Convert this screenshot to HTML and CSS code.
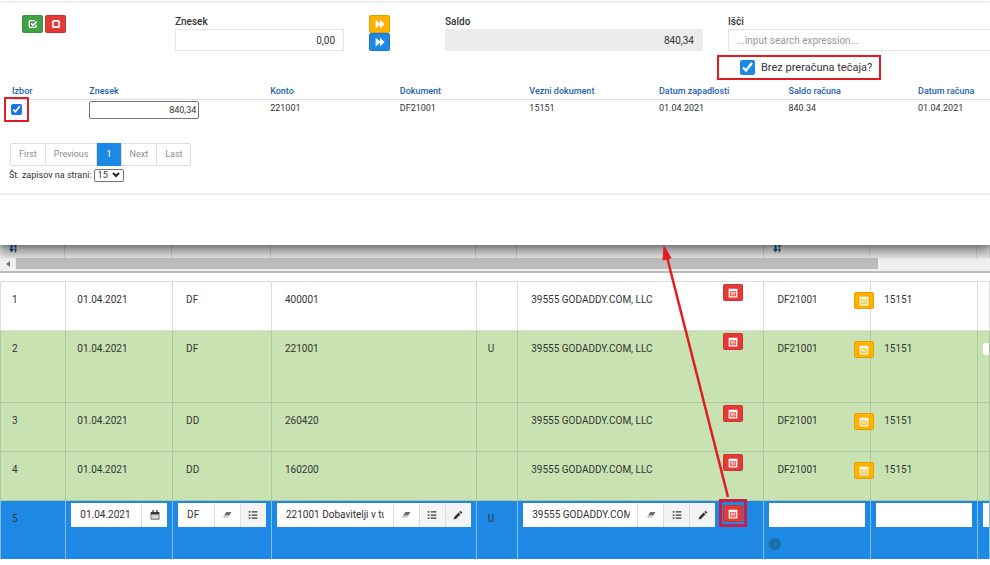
FILE: index.html
```html
<!DOCTYPE html>
<html lang="sl">

<head>
    <meta charset="UTF-8">
    <title>Zapiranje postavk</title>
    <link rel="stylesheet" href="styles.css">
</head>

<body>
    <svg class="symbols" aria-hidden="true">
        <symbol id="i-check" viewBox="0 0 16 16">
            <path d="M13 9v2.5a2 2 0 0 1-2 2H4a2 2 0 0 1-2-2v-7a2 2 0 0 1 2-2h7" fill="none" stroke="currentColor" stroke-width="2" />
            <path d="M5 7l3 3 6-6" fill="none" stroke="currentColor" stroke-width="2.6" />
        </symbol>
        <symbol id="i-square" viewBox="0 0 16 16">
            <rect x="3" y="3" width="10" height="10" rx="2" fill="none" stroke="currentColor" stroke-width="3" />
        </symbol>
        <symbol id="i-forward" viewBox="0 0 16 16">
            <path d="M1 1l7 6V1l7.500 7L8 15V9l-7 6z" fill="currentColor" />
        </symbol>
        <symbol id="i-form" viewBox="0 0 16 16">
            <path d="M1 1h14v14H1zM3 5v8h10V5z" fill="currentColor" fill-rule="evenodd" />
            <path d="M4 7h8M4 9h5M10 9h2M4 11h8" stroke="currentColor" stroke-width="1.2" />
        </symbol>
        <symbol id="i-calendar" viewBox="0 0 16 16">
            <path d="M1 3h14v12H1zM2 7v7h12V7zM4 0h2v3H4zM10 0h2v3h-2z" fill="currentColor" fill-rule="evenodd" />
            <path d="M2 7h12v7H2z" fill="currentColor" opacity=".2" />
        </symbol>
        <symbol id="i-eraser" viewBox="0 0 16 16">
            <path d="M7 3h8l-5 9H1z" fill="currentColor" opacity=".3" />
            <path d="M7 3h8l-3 5H4z" fill="currentColor" opacity=".6" />
        </symbol>
        <symbol id="i-list" viewBox="0 0 16 16">
            <path d="M1 3h3M6 3h9M1 8h3M6 8h9M1 13h3M6 13h9" stroke="currentColor" stroke-width="2" />
        </symbol>
        <symbol id="i-pencil" viewBox="0 0 16 16">
            <path d="M1 15l1-4 7-7 3 3-7 7zM10 3l2-2 3 3-2 2z" fill="currentColor" />
        </symbol>
        <symbol id="i-sort" viewBox="0 0 16 16">
            <path d="M3 0h4v8h3l-5 7-5-7h3zM11 0h4v5h-4zM11 7h4v4l-2 4h-2l1-4h-1z" fill="currentColor" />
        </symbol>
    </svg>

    <div class="page">
        <section class="modal">
            <div class="toolbar">
                <div class="actions">
                    <button class="btn green" type="button" aria-label="Izberi vse"><svg><use href="#i-check" /></svg></button>
                    <button class="btn red" type="button" aria-label="Počisti izbor"><svg><use href="#i-square" /></svg></button>
                </div>
                <div class="field">
                    <label for="znesek">Znesek</label>
                    <input class="number" type="text" id="znesek" value="0,00">
                </div>
                <div class="transfer">
                    <button class="btn yellow" type="button" aria-label="Prenesi"><svg><use href="#i-forward" /></svg></button>
                    <button class="btn blue" type="button" aria-label="Prenesi vse"><svg><use href="#i-forward" /></svg></button>
                </div>
                <div class="field">
                    <label for="saldo">Saldo</label>
                    <input class="number" type="text" id="saldo" value="840,34" readonly>
                </div>
                <div class="field search">
                    <label for="isci">Išči</label>
                    <input type="text" id="isci" placeholder="...input search expression...">
                    <div class="option marked">
                        <input type="checkbox" id="brez" checked>
                        <label for="brez">Brez preračuna tečaja?</label>
                    </div>
                </div>
            </div>

            <table class="items">
                <colgroup>
                    <col class="w-izbor"><col class="w-znesek"><col><col><col><col><col><col class="w-last">
                </colgroup>
                <thead>
                    <tr>
                        <th>Izbor</th>
                        <th>Znesek</th>
                        <th>Konto</th>
                        <th>Dokument</th>
                        <th>Vezni dokument</th>
                        <th>Datum zapadlosti</th>
                        <th>Saldo računa</th>
                        <th>Datum računa</th>
                    </tr>
                </thead>
                <tbody>
                    <tr>
                        <td class="pick"><label class="marked"><input type="checkbox" aria-label="Izbor" checked></label></td>
                        <td><input class="amount" type="text" aria-label="Znesek" value="840,34"></td>
                        <td>221001</td>
                        <td>DF21001</td>
                        <td>15151</td>
                        <td>01.04.2021</td>
                        <td>840.34</td>
                        <td>01.04.2021</td>
                    </tr>
                </tbody>
            </table>

            <nav class="pagination">
                <a href="#">First</a>
                <a href="#">Previous</a>
                <a class="active" href="#">1</a>
                <a href="#">Next</a>
                <a href="#">Last</a>
            </nav>
            <div class="page-size">
                <label for="pageSize">Št. zapisov na strani:</label>
                <div class="select">
                    <select id="pageSize">
                        <option selected>15</option>
                        <option>30</option>
                    </select>
                    <svg viewBox="0 0 8 8" aria-hidden="true"><path d="M1 2l3 3 3-3" /></svg>
                </div>
            </div>
            <div class="modal-footer"></div>
        </section>

        <div class="grid-head columns">
            <span><svg><use href="#i-sort" /></svg></span>
            <span></span><span></span><span></span><span></span><span></span>
            <span><svg><use href="#i-sort" /></svg></span>
            <span></span><span></span>
        </div>
        <div class="scrollbar">
            <button type="button" aria-label="Pomik levo"></button>
            <div class="thumb"></div>
        </div>

        <table class="entries">
            <colgroup>
                <col class="c-num"><col class="c-date"><col class="c-type"><col class="c-konto"><col class="c-u">
                <col class="c-partner"><col class="c-doc"><col class="c-link"><col>
            </colgroup>
            <tbody>
                <tr>
                    <td>1</td>
                    <td>01.04.2021</td>
                    <td>DF</td>
                    <td>400001</td>
                    <td></td>
                    <td><div class="with-btn">39555 GODADDY.COM, LLC<button class="btn red" type="button" aria-label="Odprte postavke"><svg><use href="#i-form" /></svg></button></div></td>
                    <td><div class="with-btn doc">DF21001<button class="btn yellow" type="button" aria-label="Dokument"><svg><use href="#i-form" /></svg></button></div></td>
                    <td>15151</td>
                    <td></td>
                </tr>
                <tr class="closed tall">
                    <td>2</td>
                    <td>01.04.2021</td>
                    <td>DF</td>
                    <td>221001</td>
                    <td>U</td>
                    <td><div class="with-btn">39555 GODADDY.COM, LLC<button class="btn red" type="button" aria-label="Odprte postavke"><svg><use href="#i-form" /></svg></button></div></td>
                    <td><div class="with-btn doc">DF21001<button class="btn yellow" type="button" aria-label="Dokument"><svg><use href="#i-form" /></svg></button></div></td>
                    <td>15151</td>
                    <td class="edge"><div class="chip"></div></td>
                </tr>
                <tr class="closed">
                    <td>3</td>
                    <td>01.04.2021</td>
                    <td>DD</td>
                    <td>260420</td>
                    <td></td>
                    <td><div class="with-btn">39555 GODADDY.COM, LLC<button class="btn red" type="button" aria-label="Odprte postavke"><svg><use href="#i-form" /></svg></button></div></td>
                    <td><div class="with-btn doc">DF21001<button class="btn yellow" type="button" aria-label="Dokument"><svg><use href="#i-form" /></svg></button></div></td>
                    <td>15151</td>
                    <td></td>
                </tr>
                <tr class="closed">
                    <td>4</td>
                    <td>01.04.2021</td>
                    <td>DD</td>
                    <td>160200</td>
                    <td></td>
                    <td><div class="with-btn">39555 GODADDY.COM, LLC<button class="btn red" type="button" aria-label="Odprte postavke"><svg><use href="#i-form" /></svg></button></div></td>
                    <td><div class="with-btn doc">DF21001<button class="btn yellow" type="button" aria-label="Dokument"><svg><use href="#i-form" /></svg></button></div></td>
                    <td>15151</td>
                    <td></td>
                </tr>
                <tr class="editing">
                    <td>5</td>
                    <td class="edit">
                        <div class="group">
                            <input type="text" aria-label="Datum" value="01.04.2021">
                            <button class="white" type="button" aria-label="Koledar"><svg><use href="#i-calendar" /></svg></button>
                        </div>
                    </td>
                    <td class="edit">
                        <div class="group">
                            <input type="text" aria-label="Vrsta" value="DF">
                            <button class="white" type="button" aria-label="Briši"><svg><use href="#i-eraser" /></svg></button>
                            <button type="button" aria-label="Seznam"><svg><use href="#i-list" /></svg></button>
                        </div>
                    </td>
                    <td class="edit">
                        <div class="group">
                            <input type="text" aria-label="Konto" value="221001 Dobavitelji v tujini">
                            <button class="white" type="button" aria-label="Briši"><svg><use href="#i-eraser" /></svg></button>
                            <button type="button" aria-label="Seznam"><svg><use href="#i-list" /></svg></button>
                            <button type="button" aria-label="Uredi"><svg><use href="#i-pencil" /></svg></button>
                        </div>
                    </td>
                    <td>U</td>
                    <td class="edit">
                        <div class="partner">
                            <div class="group">
                                <input type="text" aria-label="Partner" value="39555 GODADDY.COM, LLC">
                                <button class="white" type="button" aria-label="Briši"><svg><use href="#i-eraser" /></svg></button>
                                <button type="button" aria-label="Seznam"><svg><use href="#i-list" /></svg></button>
                                <button type="button" aria-label="Uredi"><svg><use href="#i-pencil" /></svg></button>
                            </div>
                            <div class="marked target"><button class="btn red" type="button" aria-label="Odprte postavke"><svg><use href="#i-form" /></svg></button></div>
                        </div>
                    </td>
                    <td class="edit">
                        <div class="group"><input type="text" aria-label="Dokument"></div>
                        <span class="info">i</span>
                    </td>
                    <td class="edit">
                        <div class="group"><input type="text" aria-label="Vezni dokument"></div>
                    </td>
                    <td class="edit last">
                        <div class="group"></div>
                    </td>
                </tr>
            </tbody>
        </table>

        <svg class="arrow" viewBox="0 0 70 254" aria-hidden="true">
            <path d="M67 252L6 12" stroke="#e31b23" stroke-width="2.500" />
            <path d="M3 1L10 13L2 15z" fill="#e31b23" stroke="#e31b23" />
        </svg>
    </div>
</body>

</html>
```

FILE: styles.css
```css
* {
    box-sizing: border-box;
}

body {
    margin: 0;
    background: #fff;
    color: #333;
    font-family: Roboto, Arial, sans-serif;
    font-size: 10px;
    line-height: 14px;
}

input,
select,
button {
    margin: 0;
    color: inherit;
    font: inherit;
}

.symbols {
    display: none;
}

.page {
    position: relative;
    overflow: hidden;
}

/* modal */
.modal {
    position: relative;
    margin-top: 1px;
    border-top: 2px solid #eee;
    background: #fff;
    box-shadow: 0 8px 8px rgba(0, 0, 0, 0.35), 0 2px 3px rgba(0, 0, 0, 0.2);
}

.toolbar {
    display: grid;
    grid-template-columns: 153fr 194fr 76fr 283fr 262fr;
    padding: 12px 0 0 22px;
}

.actions {
    display: flex;
    align-items: flex-start;
    gap: 2px;
}

.transfer {
    display: flex;
    flex-direction: column;
}

.btn {
    display: flex;
    align-items: center;
    justify-content: center;
    width: 20px;
    height: 17px;
    padding: 0;
    border: 1px solid rgba(0, 0, 0, 0.1);
    border-radius: 2px;
    color: #fff;
}

.btn svg {
    width: 10px;
    height: 10px;
}

.actions .btn {
    width: 21px;
    height: 18px;
}

.transfer .btn {
    width: 21px;
    height: 18px;
}

.green {
    background: #43a047;
}

.red {
    background: #e53935;
}

.yellow {
    background: #ffb300;
}

.blue {
    background: #1e88e5;
}

.field {
    padding-right: 25px;
}

.field > label {
    display: block;
    font-weight: 500;
}

.field > input {
    display: block;
    width: 100%;
    height: 22px;
    padding: 0 8px;
    border: 1px solid #e5e5e5;
    background: #fff;
}

.field > input[readonly] {
    border-color: #ececec;
    background: #ececec;
}

.field.search {
    padding-right: 0;
}

.search > input {
    border-right: 0;
}

.field ::placeholder {
    color: #999;
}

.number {
    text-align: right;
}

.marked {
    border: 2px solid #e31b23;
}

.option {
    display: flex;
    align-items: center;
    gap: 6px;
    width: 164px;
    height: 25px;
    margin: 4px 0 0 -11px;
    padding-left: 21px;
    font-size: 11px;
}

.option input {
    width: 15px;
    height: 15px;
    accent-color: #1e88e5;
}

.items {
    width: calc(100% - 12px);
    margin: 3px 0 0 12px;
    border-collapse: collapse;
    table-layout: fixed;
    font-size: 9px;
}

.items col {
    width: 13.25%;
}

.items .w-izbor {
    width: 7.9%;
}

.items .w-znesek {
    width: 18.5%;
}

.items .w-last {
    width: auto;
}

.items th {
    height: 16px;
    padding: 0;
    border-bottom: 1px solid #ddd;
    color: #1f63ac;
    font-weight: 500;
    text-align: left;
}

.items td {
    height: 24px;
    padding: 1px 0 0;
    vertical-align: top;
}

.items .pick {
    padding: 0;
}

/* the frame covers the header line */
.pick label {
    position: relative;
    display: flex;
    align-items: center;
    justify-content: center;
    width: 25px;
    height: 25px;
    margin: -3px 0 0 -8px;
}

.pick input {
    width: 11px;
    height: 11px;
    accent-color: #1a73e8;
}

.amount {
    display: block;
    width: 110px;
    height: 18px;
    padding: 0 2px;
    border: 1px solid #767676;
    border-radius: 2px;
    text-align: right;
}

.pagination {
    display: flex;
    width: max-content;
    margin: 20px 0 0 10px;
    border: 1px solid #ddd;
    border-radius: 2px;
    font-size: 9px;
    line-height: 21px;
}

.pagination a {
    padding: 0 8px;
    border-right: 1px solid #ddd;
    color: #868e96;
    text-decoration: none;
}

.pagination a:last-child {
    border-right: 0;
}

.pagination .active {
    margin: -1px 0;
    padding: 1px 9px;
    background: #1e88e5;
    color: #fff;
}

.page-size {
    display: flex;
    align-items: center;
    gap: 2px;
    height: 18px;
    margin-left: 9px;
    font-size: 9px;
}

.select {
    display: grid;
    align-items: center;
    width: 30px;
}

.select select,
.select svg {
    grid-area: 1 / 1;
}

.select select {
    height: 13px;
    padding: 0 0 0 3px;
    border: 1px solid #767676;
    border-radius: 2px;
    background: #fff;
    line-height: 11px;
    appearance: none;
}

.select svg {
    justify-self: end;
    width: 8px;
    height: 8px;
    margin-right: 4px;
    fill: none;
    stroke: #222;
    stroke-width: 2;
    pointer-events: none;
}

.modal-footer {
    height: 52px;
    margin-top: 9px;
    border-top: 2px solid #eee;
}

/* header strip that shows below the modal */
.grid-head {
    display: grid;
    grid-template-columns: 65fr 107fr 99fr 205fr 41fr 247fr 106fr 107fr 13fr;
    height: 13px;
    background: #e4e4e4;
}

.grid-head span {
    display: flex;
    padding-left: 9px;
    border-right: 1px solid #ccc;
    color: #1f4e80;
}

.grid-head svg {
    width: 8px;
    height: 8px;
}

.scrollbar {
    display: flex;
    height: 15px;
    padding-bottom: 2px;
    border-bottom: 2px solid #bbb;
    background: #f0f0f0;
}

.scrollbar button {
    display: flex;
    align-items: center;
    justify-content: center;
    width: 16px;
    padding: 0;
    border: 0;
    background: #f0f0f0;
}

.scrollbar button::before {
    content: "";
    border: 3px solid transparent;
    border-right: 4px solid #777;
    border-left: 0;
}

.thumb {
    width: 87.1%;
    background: #bdbdbd;
}

/* entries */
.entries {
    width: 100%;
    margin-top: 8px;
    border-collapse: collapse;
    table-layout: fixed;
}

.c-num {
    width: 6.6%;
}

.c-date,
.c-link {
    width: 10.8%;
}

.c-type {
    width: 10%;
}

.c-konto {
    width: 20.7%;
}

.c-u {
    width: 4.2%;
}

.c-partner {
    width: 24.9%;
}

.c-doc {
    width: 10.8%;
}

.entries td {
    height: 49px;
    padding: 11px 0 0 13px;
    border: 1px solid #ddd;
    vertical-align: top;
}

.entries td:first-child,
.entries td:nth-child(2),
.entries td:nth-child(5) {
    padding-left: 11px;
}

.entries .closed td {
    border-color: #afc79b;
    background: #c8e3b1;
}

.entries .tall td {
    height: 72px;
}

.with-btn {
    display: flex;
    justify-content: space-between;
    height: 14px;
    padding-right: 20px;
}

.with-btn .btn {
    margin-top: -9px;
}

.doc {
    margin-right: -4px;
    padding-right: 0;
}

.doc .btn {
    position: relative;
    margin-top: -1px;
}

.entries .edge {
    padding: 12px 0 0 5px;
}

.chip {
    height: 12px;
    border-radius: 2px 0 0 2px;
    background: #fff;
}

.entries .editing td {
    height: 58px;
    border-color: #7fc0f5;
    border-bottom: 0;
    background: #1e88e5;
}

.entries .editing .edit {
    padding: 2px 5px 0;
}

.entries .editing .last {
    padding-right: 0;
}

.group {
    display: flex;
    height: 24px;
    background: #fff;
}

.group input {
    flex: 1;
    min-width: 0;
    padding: 0 9px;
    border: 0;
    background: #fff;
}

.group button {
    display: flex;
    align-items: center;
    justify-content: center;
    width: 26px;
    padding: 0;
    border: 0;
    border-left: 1px solid #ddd;
    background: #f4f4f4;
}

.group .white {
    background: #fff;
}

.group svg {
    width: 10px;
    height: 10px;
}

.partner {
    display: flex;
    gap: 4px;
    padding-right: 11px;
}

.partner .group {
    flex: 1;
    min-width: 0;
}

.partner input {
    padding-right: 7px;
}

.target {
    display: flex;
    justify-content: center;
    width: 28px;
    height: 28px;
    margin-top: -4px;
    padding-top: 3px;
    border: 3px solid #c3204b;
}

.info {
    display: block;
    width: 12px;
    height: 12px;
    margin-top: 11px;
    border-radius: 50%;
    background: #1b6f9f;
    color: #1e88e5;
    line-height: 12px;
    text-align: center;
}

/* arrow from the red button up to the modal */
.arrow {
    position: absolute;
    top: 245px;
    left: 66.8%;
    z-index: 2;
    width: 70px;
    height: 254px;
    pointer-events: none;
}
```
